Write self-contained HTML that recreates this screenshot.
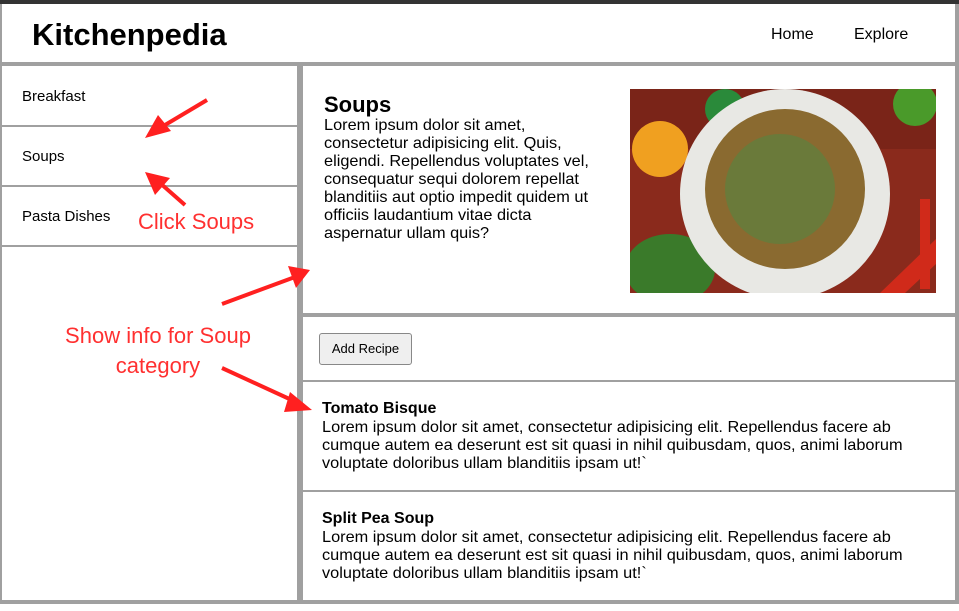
<!DOCTYPE html><html><head><style>
*{margin:0;padding:0;box-sizing:border-box}
body{width:959px;height:611px;background:#fff;font-family:"Liberation Sans",sans-serif;position:relative;overflow:hidden;color:#000}
.a{position:absolute}
.g{position:absolute;background:#a0a0a0}
.t{font-size:16px;line-height:18px;white-space:nowrap;transform:scaleX(1.02);transform-origin:0 0}
</style></head><body>
<div class="a" style="left:0;top:0;width:959px;height:4px;background:#333"></div>
<div class="g" style="left:0;top:4px;width:2px;height:600px"></div>
<div class="g" style="left:955px;top:4px;width:4px;height:600px"></div>
<div class="a" style="left:32px;top:17px;font-size:31px;font-weight:bold">Kitchenpedia</div>
<div class="a" style="left:771px;top:26px;font-size:16px">Home</div>
<div class="a" style="left:854px;top:26px;font-size:16px">Explore</div>
<div class="g" style="left:0;top:62px;width:959px;height:4px"></div>
<div class="g" style="left:297px;top:66px;width:6px;height:538px"></div>
<div class="g" style="left:0;top:600px;width:959px;height:4px"></div>
<div class="a" style="left:22px;top:88px;font-size:15px">Breakfast</div>
<div class="g" style="left:0;top:125px;width:297px;height:2px"></div>
<div class="a" style="left:22px;top:148px;font-size:15px">Soups</div>
<div class="g" style="left:0;top:185px;width:297px;height:2px"></div>
<div class="a" style="left:22px;top:208px;font-size:15px">Pasta Dishes</div>
<div class="g" style="left:0;top:245px;width:297px;height:2px"></div>
<div class="a" style="left:324px;top:92px;font-size:22px;font-weight:bold">Soups</div>
<div class="a t" style="left:324px;top:117px">Lorem ipsum dolor sit amet,<br>consectetur adipisicing elit. Quis,<br>eligendi. Repellendus voluptates vel,<br>consequatur sequi dolorem repellat<br>blanditiis aut optio impedit quidem ut<br>officiis laudantium vitae dicta<br>aspernatur ullam quis?</div>
<svg class="a" style="left:630px;top:89px" width="306" height="204">
<rect width="306" height="204" fill="#8a2a1c"/>
<rect x="0" y="0" width="306" height="60" fill="#7a2418"/>
<circle cx="30" cy="60" r="28" fill="#f0a020"/>
<circle cx="95" cy="20" r="20" fill="#2a8a3a"/>
<circle cx="285" cy="15" r="22" fill="#4a9a2a"/>
<ellipse cx="40" cy="180" rx="45" ry="35" fill="#3a7a2a"/>
<circle cx="155" cy="105" r="105" fill="#e8e8e4"/>
<circle cx="155" cy="100" r="80" fill="#8a6a30"/>
<circle cx="150" cy="100" r="55" fill="#6a7a3a"/>
<path d="M250 204 L306 150 L306 175 L275 204Z" fill="#d02a1a"/>
<rect x="290" y="110" width="10" height="90" fill="#d02a1a"/>
</svg>
<div class="g" style="left:303px;top:313px;width:652px;height:4px"></div>
<div class="a" style="left:319px;top:333px;width:93px;height:32px;border:1px solid #888;border-radius:3px;background:#efefef;font-size:13px;line-height:30px;text-align:center">Add Recipe</div>
<div class="g" style="left:303px;top:380px;width:652px;height:2px"></div>
<div class="a" style="left:322px;top:400px;font-size:16px;font-weight:bold">Tomato Bisque</div>
<div class="a t" style="left:322px;top:419px">Lorem ipsum dolor sit amet, consectetur adipisicing elit. Repellendus facere ab<br>cumque autem ea deserunt est sit quasi in nihil quibusdam, quos, animi laborum<br>voluptate doloribus ullam blanditiis ipsam ut!`</div>
<div class="g" style="left:303px;top:490px;width:652px;height:2px"></div>
<div class="a" style="left:322px;top:510px;font-size:16px;font-weight:bold">Split Pea Soup</div>
<div class="a t" style="left:322px;top:529px">Lorem ipsum dolor sit amet, consectetur adipisicing elit. Repellendus facere ab<br>cumque autem ea deserunt est sit quasi in nihil quibusdam, quos, animi laborum<br>voluptate doloribus ullam blanditiis ipsam ut!`</div>
<div class="a" style="left:138px;top:209px;font-size:22px;color:#ff3030">Click Soups</div>
<div class="a" style="left:40px;top:321px;width:236px;text-align:center;font-size:22px;line-height:30px;color:#ff3030">Show info for Soup category</div>
<svg class="a" style="left:0;top:0" width="959" height="611">
<g stroke="#ff2020" stroke-width="4" fill="#ff2020">
<line x1="207" y1="100" x2="160" y2="128"/><polygon points="145,138 158,115 171,131" stroke="none"/>
<line x1="185" y1="205" x2="160" y2="183"/><polygon points="145,172 170,178 155,195" stroke="none"/>
<line x1="222" y1="304" x2="295" y2="277"/><polygon points="310,270 288,266 296,288" stroke="none"/>
<line x1="222" y1="368" x2="296" y2="402"/><polygon points="312,410 290,392 284,412" stroke="none"/>
</g></svg>
</body></html>
